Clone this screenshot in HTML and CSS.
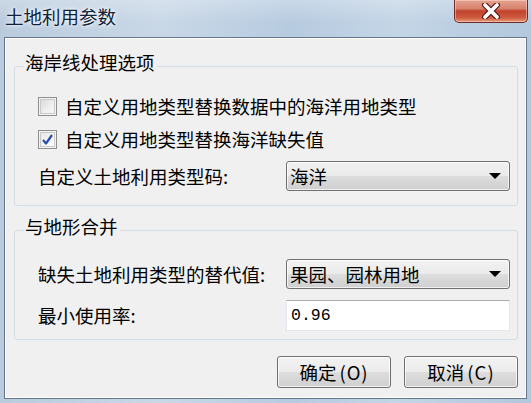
FILE: index.html
```html
<!DOCTYPE html>
<html lang="zh-CN">
<head>
<meta charset="utf-8">
<title>土地利用参数</title>
<link rel="stylesheet" href="styles.css">
</head>
<body>
<div class="window">
  <div class="titlebar">
    <div class="title">土地利用参数</div>
    <div class="close">
      <svg width="24" height="16" viewBox="0 0 24 16">
        <path d="M6 2 L18 14 M18 2 L6 14" stroke="#5a1f1f" stroke-width="6" stroke-linecap="round" fill="none"/>
        <path d="M6 2 L18 14 M18 2 L6 14" stroke="#ffffff" stroke-width="3.6" stroke-linecap="round" fill="none"/>
      </svg>
    </div>
  </div>
  <div class="client">
    <fieldset class="group group-coast">
      <legend class="group-title">海岸线处理选项</legend>
      <div class="check-row">
        <span class="checkbox"></span>
        <span class="text">自定义用地类型替换数据中的海洋用地类型</span>
      </div>
      <div class="check-row">
        <span class="checkbox checked">
          <svg width="13" height="13" viewBox="0 0 13 13"><path d="M2 7 L5 10.5 L11 2" stroke="#2a4ea8" stroke-width="2.2" fill="none" stroke-linejoin="round"/></svg>
        </span>
        <span class="text">自定义用地类型替换海洋缺失值</span>
      </div>
      <div class="field-row field-first">
        <span class="text">自定义土地利用类型码:</span>
        <div class="select"><span>海洋</span><span class="arrow"></span></div>
      </div>
    </fieldset>
    <fieldset class="group group-terrain">
      <legend class="group-title">与地形合并</legend>
      <div class="field-row">
        <span class="text">缺失土地利用类型的替代值:</span>
        <div class="select"><span>果园、园林用地</span><span class="arrow"></span></div>
      </div>
      <div class="field-row field-input">
        <span class="text">最小使用率:</span>
        <div class="input">0.96</div>
      </div>
    </fieldset>
    <div class="buttons">
      <div class="btn">确定<span class="mn">(O)</span></div>
      <div class="btn">取消<span class="mn">(C)</span></div>
    </div>
  </div>
</div>
</body>
</html>
```

FILE: styles.css
```css
* { box-sizing: border-box; }

html, body {
  margin: 0;
  padding: 0;
}

body {
  width: 531px;
  height: 403px;
  overflow: hidden;
  font-family: "Noto Sans CJK SC", "Noto Sans", sans-serif;
  color: #000;
  background: linear-gradient(90deg, #b9cbdd 0%, #c9d8e7 30%, #b7cbe0 55%, #c4d5e6 75%, #b3c8dd 100%);
}

.window {
  display: flex;
  flex-direction: column;
  height: 403px;
}

.titlebar {
  height: 37px;
  display: flex;
  justify-content: space-between;
  align-items: flex-start;
  background: linear-gradient(180deg, rgba(255,255,255,0.25) 0%, rgba(255,255,255,0) 60%);
}

.title {
  margin: 4px 0 0 5px;
  font-size: 18.5px;
  line-height: 24px;
  color: #10223a;
  text-shadow: 0 0 6px #fff, 0 0 3px #fff;
}

.close {
  width: 74px;
  height: 23px;
  margin-right: 3px;
  border: 1px solid #6e2c26;
  border-top: none;
  border-radius: 0 0 5px 5px;
  background: linear-gradient(180deg, #e6a492 0%, #d5806b 40%, #c1422b 50%, #cf5a3e 80%, #e59c7d 100%);
  box-shadow: inset 0 0 0 1px rgba(255,220,210,0.5);
  display: flex;
  align-items: center;
  justify-content: center;
}

.client {
  flex: 1;
  margin: 0 4px 4px 4px;
  background: #f0f0f0;
  border: 1px solid #66778b;
  box-shadow: inset 0 0 0 1px #ffffff;
  padding: 13px 8px 0 9px;
  display: flex;
  flex-direction: column;
}

.group {
  margin: 0;
  padding: 0 0 0 23px;
  border: 1px solid #d3dde6;
  border-radius: 3px;
  min-width: 0;
}

.group-title {
  margin-left: -14px;
  padding: 0 2px 9px 1px;
  font-size: 18.5px;
  line-height: 22px;
}

.group-coast {
  padding-top: 13px;
  padding-bottom: 14px;
}

.group-terrain {
  margin-top: 9px;
  padding-top: 13px;
  padding-bottom: 9px;
}

.text {
  font-size: 18.5px;
  line-height: 22px;
  white-space: nowrap;
}

.check-row {
  display: flex;
  align-items: center;
  height: 22px;
  margin-bottom: 11px;
}

.checkbox {
  width: 19px;
  height: 19px;
  margin: 0 8px 0 0;
  border: 1px solid #8e8f8f;
  background: linear-gradient(135deg, #d4d4d4 0%, #eeeeee 55%, #fafafa 100%);
  box-shadow: inset 0 0 0 1px #f4f4f4, inset 0 0 0 2px #c9c9c9;
  display: flex;
  align-items: center;
  justify-content: center;
  flex-shrink: 0;
}

.checkbox.checked {
  background: linear-gradient(135deg, #e4e4e4 0%, #f6f6f6 60%, #ffffff 100%);
}

.field-row {
  display: flex;
  align-items: center;
  justify-content: space-between;
  padding-right: 7px;
  height: 30px;
}

.field-first {
  margin-top: 2px;
}

.field-input {
  margin-top: 11px;
}

.select {
  width: 224px;
  height: 30px;
  border: 1px solid #707070;
  border-radius: 3px;
  background: linear-gradient(180deg, #f2f2f2 0%, #ebebeb 48%, #dddddd 52%, #cfcfcf 100%);
  box-shadow: inset 0 0 0 1px rgba(255,255,255,0.7);
  display: flex;
  align-items: center;
  justify-content: space-between;
  padding: 0 8px 0 3px;
  font-size: 18.5px;
  line-height: 22px;
}

.arrow {
  width: 0;
  height: 0;
  border-left: 6px solid transparent;
  border-right: 6px solid transparent;
  border-top: 6px solid #000;
}

.input {
  width: 224px;
  height: 31px;
  background: #fff;
  border: 1px solid #e2e8ee;
  border-top-color: #abadb3;
  padding: 0 4px;
  font-family: "Liberation Mono", "DejaVu Sans Mono", monospace;
  font-size: 16.5px;
  line-height: 29px;
}

.buttons {
  display: flex;
  justify-content: flex-end;
  gap: 13px;
  margin-top: 16px;
}

.btn {
  width: 114px;
  height: 32px;
  border: 1px solid #707070;
  border-radius: 3px;
  background: linear-gradient(180deg, #f2f2f2 0%, #ebebeb 48%, #dddddd 52%, #cfcfcf 100%);
  box-shadow: inset 0 0 0 1px rgba(255,255,255,0.75);
  display: flex;
  align-items: center;
  justify-content: center;
  font-size: 18.5px;
  line-height: 22px;
}

.mn {
  margin-left: 3px;
  letter-spacing: 1px;
}
```
